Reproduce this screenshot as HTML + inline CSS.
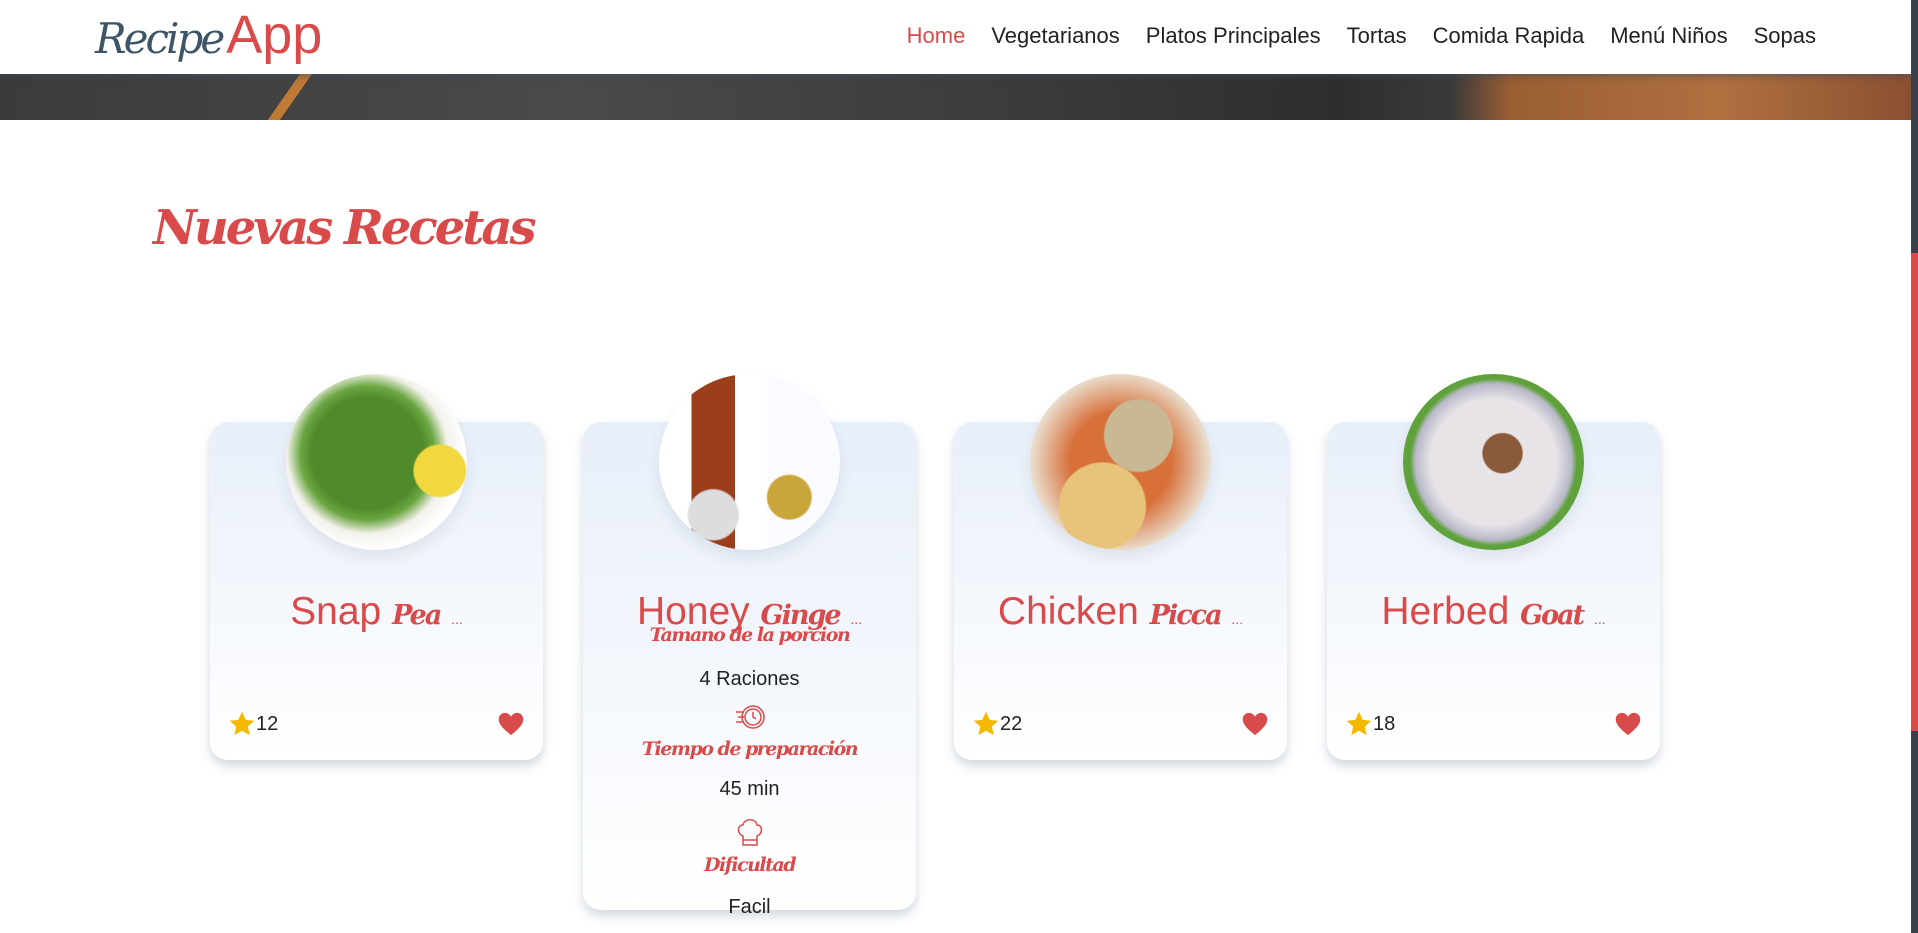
<!DOCTYPE html>
<html><head><meta charset="utf-8"><style>
*{margin:0;padding:0;box-sizing:border-box}
body{width:1918px;height:933px;overflow:hidden;background:#fff;font-family:"Liberation Sans",sans-serif;position:relative}
.header{position:absolute;left:0;top:0;width:1911px;height:74px;background:#fff;z-index:3;box-shadow:0 3px 6px rgba(60,80,100,.5)}
.logo{position:absolute;left:95px;top:4px;font-size:54px;white-space:nowrap}
.logo .r{font-family:"DejaVu Serif",serif;font-style:italic;color:#3d5566;font-size:42px;letter-spacing:-3px}
.logo .a{color:#d94a4a;margin-left:4px}
nav{position:absolute;right:95px;top:23px;font-size:22px;color:#222}
nav span{margin-left:26px}
nav span.on{color:#d94a4a}
.banner{position:absolute;left:0;top:74px;width:1911px;height:46px;overflow:hidden;background:linear-gradient(90deg,#3b3b3b 0,#4a4a4a 30%,#3a3a3a 55%,#2e2e2e 70%,#3a3a3a 76%,#9a5e33 79%,#b07040 90%,#8a5030 100%)}
.banner:before{content:"";position:absolute;left:300px;top:0;width:12px;height:46px;background:#c07a35;transform:skewX(-35deg);transform-origin:top}
.sb{position:absolute;right:0;top:0;width:7px;height:933px;background:#3a4148}
.sb i{position:absolute;left:0;top:253px;width:7px;height:478px;background:#d94a4a}
h1{position:absolute;left:153px;top:200px;font-family:"DejaVu Serif",serif;font-style:italic;font-weight:bold;color:#d94a4a;font-size:48px;letter-spacing:-3px}
.card{position:absolute;top:422px;width:333px;height:338px;border-radius:18px;background:linear-gradient(#e8eff9,#fff);box-shadow:0 6px 10px rgba(80,100,130,.25)}
.img{position:absolute;left:76px;top:-48px;width:181px;height:176px;border-radius:50%;box-shadow:0 8px 14px rgba(80,100,130,.12);overflow:hidden}
.title{position:absolute;left:0;width:100%;top:168px;text-align:center;color:#d94a4a;font-size:39px;white-space:nowrap}
.title em{font-family:"DejaVu Serif",serif;font-style:italic;font-weight:bold;font-size:27px;letter-spacing:-2px}
.title small{font-size:14px}
.foot{position:absolute;left:18px;right:18px;top:288px;font-size:20px;color:#222;display:flex;justify-content:space-between;align-items:center}
.foot span{display:flex;align-items:center}
.det{position:absolute;left:0;width:100%;text-align:center;font-size:20px;color:#222}
.sc{color:#d94a4a;font-family:"DejaVu Serif",serif;font-style:italic;font-weight:bold;font-size:19px;letter-spacing:-1.5px}
</style></head><body>
<div class="header"><div class="logo"><span class="r">Recipe</span><span class="a">App</span></div>
<nav><span class="on">Home</span><span>Vegetarianos</span><span>Platos Principales</span><span>Tortas</span><span>Comida Rapida</span><span>Menú Niños</span><span>Sopas</span></nav></div>
<div class="banner"></div>
<div class="sb"><i></i></div>
<h1>Nuevas Recetas</h1>

<svg width="0" height="0" style="position:absolute"><defs>
<symbol id="st" viewBox="0 0 24 24"><path d="M12 1.5l3.2 7 7.3.7-5.5 5 1.6 7.3L12 17.8 5.4 21.5 7 14.2 1.5 9.2l7.3-.7z" fill="#f5b800"/></symbol>
<symbol id="ht" viewBox="0 0 24 24"><path d="M12 21.5C5 15.8 1.5 12.3 1.5 8 1.5 4.8 4 2.5 6.8 2.5c2.2 0 4 1.3 5.2 3.2 1.2-1.9 3-3.2 5.2-3.2 2.8 0 5.3 2.3 5.3 5.5 0 4.3-3.5 7.8-10.5 13.5z" fill="#d94a4a"/></symbol>
</defs></svg>

<div class="card" style="left:210px">
<div class="img" style="background:radial-gradient(circle at 85% 55%,#f2d840 0 14%,transparent 15%),radial-gradient(circle at 45% 45%,#4f8a2c 0 40%,#6aa640 48%,#f3f1ea 58%,#fff 70%)"></div>
<div class="title">Snap <em>Pea</em> <small>...</small></div>
<div class="foot"><span><svg width="28" height="28"><use href="#st"/></svg>12</span><svg width="28" height="28"><use href="#ht"/></svg></div></div>

<div class="card" style="left:583px;height:488px">
<div class="img" style="background:radial-gradient(circle at 72% 70%,#c9a63a 0 12%,transparent 13%),radial-gradient(circle at 30% 80%,#ddd 0 13%,transparent 14%),linear-gradient(90deg,#fff 0 18%,#9a3e1c 18% 42%,#fff 42% 60%,#fafbff 60%)"></div>
<div class="title">Honey <em>Ginge</em> <small>...</small></div>
<div class="det sc" style="top:202px">Tamano de la porcion</div>
<div class="det" style="top:246px">4 Raciones</div>
<div class="det" style="top:280px"><svg width="32" height="30" viewBox="0 0 32 30" fill="none" stroke="#d94a4a" stroke-width="1.5"><circle cx="19" cy="15" r="11"/><circle cx="19" cy="15" r="8"/><path d="M19 10v5l3 2M2 10h8M4 15h6M2 20h8"/></svg></div>
<div class="det sc" style="top:316px">Tiempo de preparación</div>
<div class="det" style="top:356px">45 min</div>
<div class="det" style="top:392px"><svg width="32" height="34" viewBox="0 0 32 34" fill="none" stroke="#d94a4a" stroke-width="1.5"><path d="M9 22C3 20 3 11 9 11C10 4 22 4 23 11C29 11 29 20 23 22V31H9Z M9 26H23"/></svg></div>
<div class="det sc" style="top:432px">Dificultad</div>
<div class="det" style="top:474px">Facil</div></div>

<div class="card" style="left:954px">
<div class="img" style="background:radial-gradient(ellipse at 60% 35%,#c8b894 0 22%,transparent 23%),radial-gradient(circle at 40% 75%,#e8c47a 0 25%,transparent 26%),radial-gradient(circle,#d8703a 0 40%,#e9dccb 70%)"></div>
<div class="title">Chicken <em>Picca</em> <small>...</small></div>
<div class="foot"><span><svg width="28" height="28"><use href="#st"/></svg>22</span><svg width="28" height="28"><use href="#ht"/></svg></div></div>

<div class="card" style="left:1327px">
<div class="img" style="background:radial-gradient(circle at 55% 45%,#8a5a3a 0 14%,transparent 15%),radial-gradient(circle,#e7e3e7 0 50%,#b8b8c8 62%,#5fa23c 66%)"></div>
<div class="title">Herbed <em>Goat</em> <small>...</small></div>
<div class="foot"><span><svg width="28" height="28"><use href="#st"/></svg>18</span><svg width="28" height="28"><use href="#ht"/></svg></div></div>
</body></html>
